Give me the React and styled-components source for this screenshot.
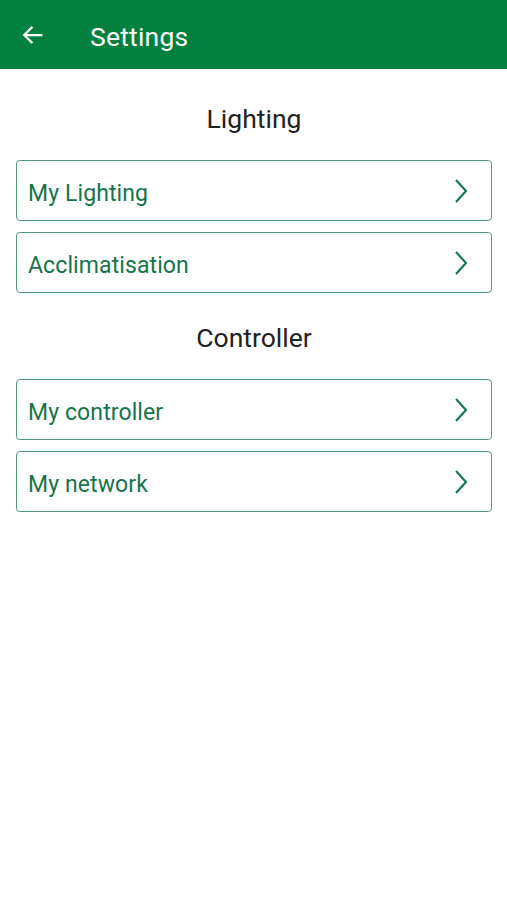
import styled, { createGlobalStyle } from 'styled-components';

const GlobalStyle = createGlobalStyle`
  body {
    margin: 0;
    background: #fff;
    font-family: Roboto, 'Noto Sans', sans-serif;
  }
`;

const sections = [
  { title: 'Lighting', items: ['My Lighting', 'Acclimatisation'] },
  { title: 'Controller', items: ['My controller', 'My network'] },
];

export default function App() {
  return (
    <Page>
      <GlobalStyle />
      <Header>
        <BackButton aria-label="Back">
          <svg width="30" height="30" viewBox="0 0 24 24">
            <path d="M19.5 12H5M11.5 5.5L5 12l6.5 6.5" fill="none" stroke="#fff" strokeWidth="1.8" />
          </svg>
        </BackButton>
        <Title>Settings</Title>
      </Header>
      <Content>
        {sections.map((section) => (
          <Section key={section.title}>
            <SectionTitle>{section.title}</SectionTitle>
            <List>
              {section.items.map((item) => (
                <Row key={item}>
                  <RowLabel>{item}</RowLabel>
                  <svg width="14" height="26" viewBox="0 0 14 26">
                    <path d="M2 2l10 11-10 11" fill="none" stroke="#16744a" strokeWidth="2.1" />
                  </svg>
                </Row>
              ))}
            </List>
          </Section>
        ))}
      </Content>
    </Page>
  );
}

const Page = styled.div`
  width: 507px;
  min-height: 900px;
  background: #fff;
`;

const Header = styled.header`
  display: flex;
  align-items: center;
  height: 69px;
  background: #02803f;
  padding: 0 0 0 18px;
  box-sizing: border-box;
`;

const BackButton = styled.div`
  display: flex;
  align-items: center;
  width: 30px;
  height: 30px;
  margin-right: 42px;
  margin-top: 1px;
`;

const Title = styled.h1`
  margin: 0;
  color: #fff;
  font-size: 26.5px;
  font-weight: 400;
  line-height: 32px;
  letter-spacing: 0.2px;
  margin-top: 4px;
`;

const Content = styled.main`
  display: flex;
  flex-direction: column;
  gap: 27px;
  padding: 32px 15px 0 16px;
`;

const Section = styled.section`
  display: flex;
  flex-direction: column;
`;

const SectionTitle = styled.h2`
  margin: 0 0 23px;
  text-align: center;
  color: #222;
  font-size: 26.5px;
  font-weight: 400;
  line-height: 36px;
`;

const List = styled.div`
  display: flex;
  flex-direction: column;
  gap: 11px;
`;

const Row = styled.div`
  display: flex;
  align-items: center;
  justify-content: space-between;
  height: 61px;
  box-sizing: border-box;
  border: 1.5px solid #529c77;
  border-radius: 4px;
  padding: 0 23px 0 11px;
`;

const RowLabel = styled.span`
  color: #16744a;
  font-size: 23px;
  letter-spacing: 0.1px;
  padding-top: 6px;
`;
